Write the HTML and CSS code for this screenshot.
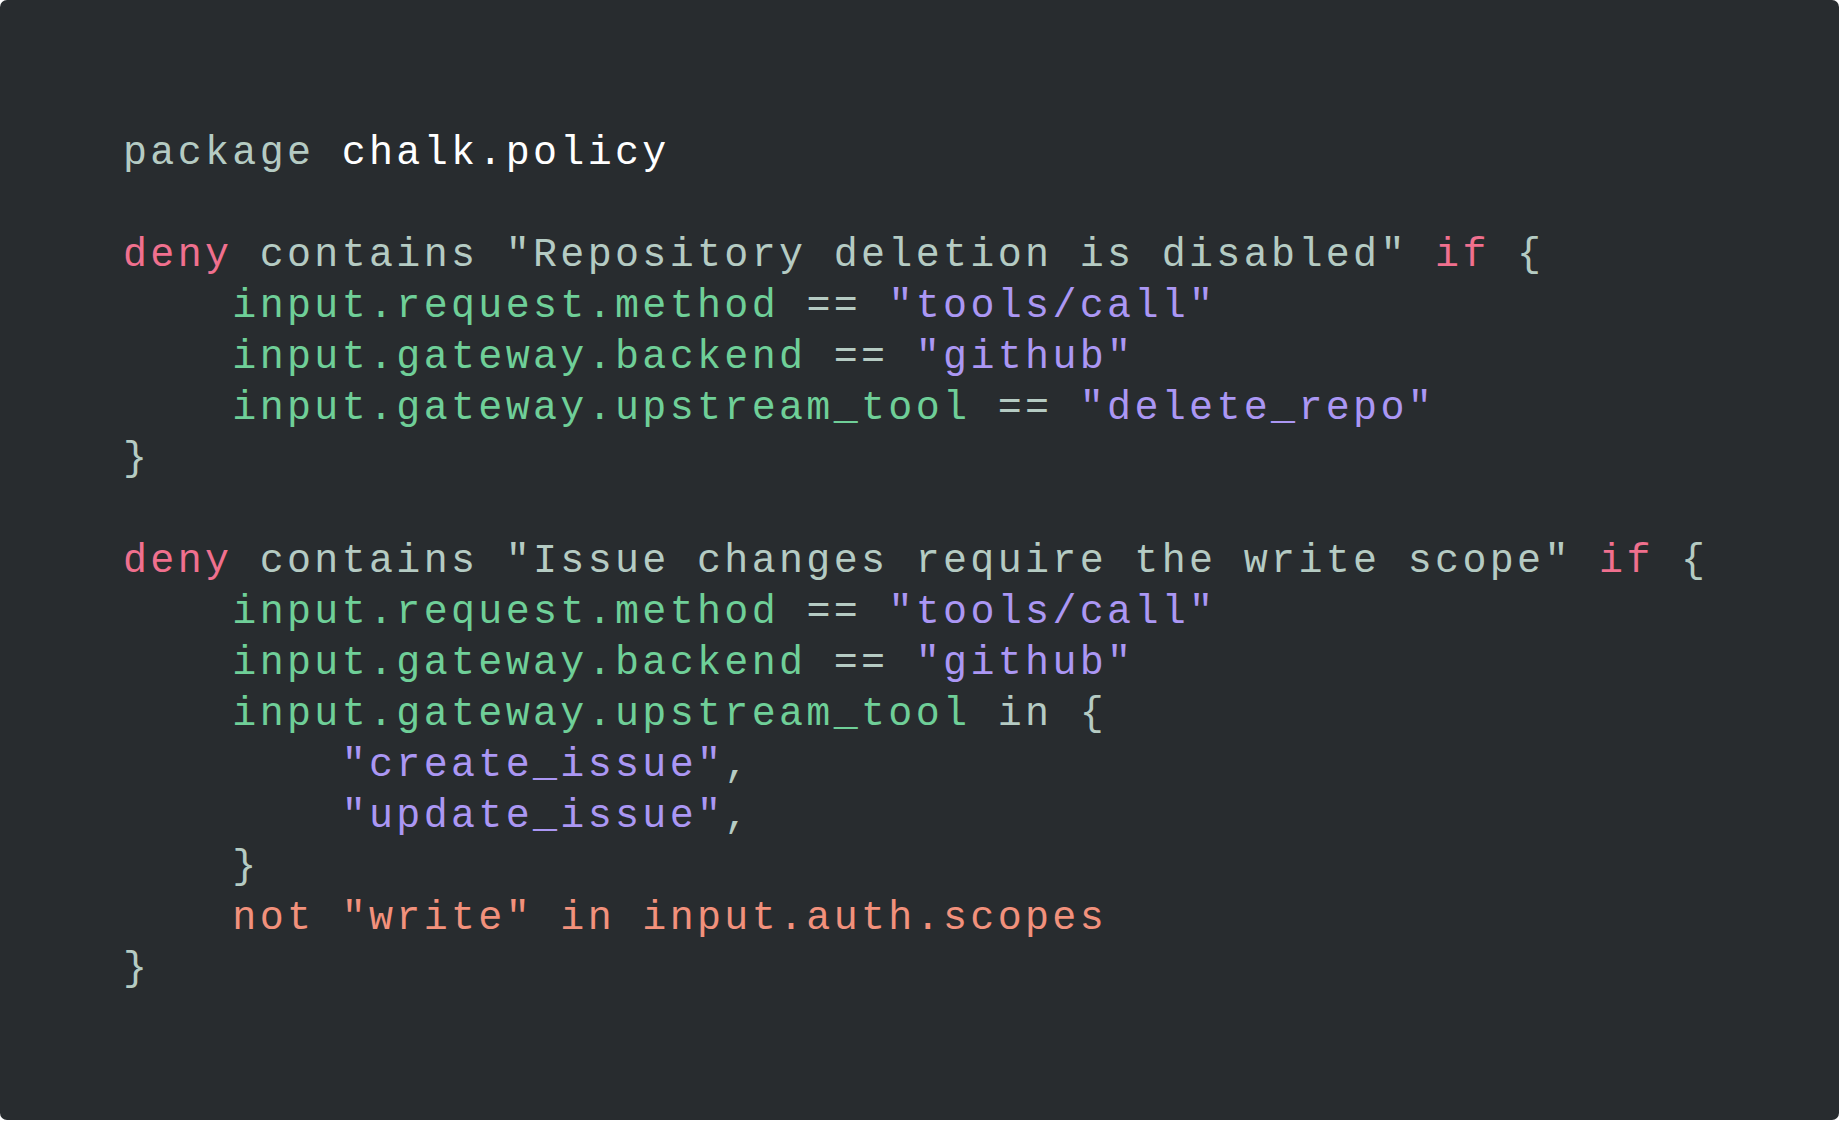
FILE: index.html
```html
<!DOCTYPE html>
<html lang="en">
<head>
<meta charset="utf-8">
<title>chalk.policy</title>
<link rel="stylesheet" href="styles.css">
</head>
<body>
<main class="card">
<pre class="code"><span class="plain">package</span> <span class="pkg">chalk.policy</span>

<span class="kw">deny</span> <span class="plain">contains "Repository deletion is disabled"</span> <span class="kw">if</span> <span class="plain">{</span>
    <span class="ref">input.request.method</span> <span class="plain">==</span> <span class="str">"tools/call"</span>
    <span class="ref">input.gateway.backend</span> <span class="plain">==</span> <span class="str">"github"</span>
    <span class="ref">input.gateway.upstream_tool</span> <span class="plain">==</span> <span class="str">"delete_repo"</span>
<span class="plain">}</span>

<span class="kw">deny</span> <span class="plain">contains "Issue changes require the write scope"</span> <span class="kw">if</span> <span class="plain">{</span>
    <span class="ref">input.request.method</span> <span class="plain">==</span> <span class="str">"tools/call"</span>
    <span class="ref">input.gateway.backend</span> <span class="plain">==</span> <span class="str">"github"</span>
    <span class="ref">input.gateway.upstream_tool</span> <span class="plain">in {</span>
        <span class="str">"create_issue"</span><span class="plain">,</span>
        <span class="str">"update_issue"</span><span class="plain">,</span>
    <span class="plain">}</span>
    <span class="neg">not "write" in input.auth.scopes</span>
<span class="plain">}</span></pre>
</main>
</body>
</html>
```

FILE: styles.css
```css
html, body {
  margin: 0;
  padding: 0;
  background: #ffffff;
}

.card {
  box-sizing: border-box;
  width: 1839px;
  height: 1120px;
  background: #282c2f;
  border-radius: 7px;
  padding: 128px 0 0 123px;
  overflow: hidden;
}

.code {
  margin: 0;
  font-family: "Liberation Mono", "DejaVu Sans Mono", monospace;
  font-size: 40px;
  line-height: 51px;
  letter-spacing: 3.33px;
  color: #b5cbc3;
  white-space: pre;
}

.plain { color: #b5cbc3; }
.pkg { color: #ffffff; }
.kw { color: #f0708e; }
.ref { color: #6fcf98; }
.str { color: #ab97f4; }
.neg { color: #f2917c; }
```
